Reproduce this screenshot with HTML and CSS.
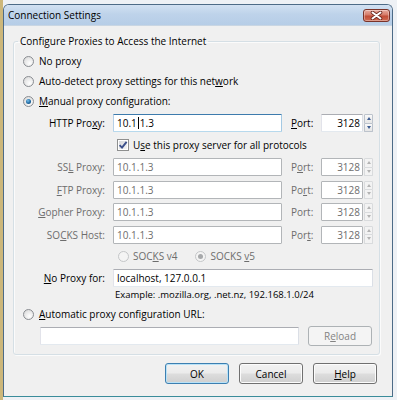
FILE: index.html
```html
<!DOCTYPE html>
<html>
<head>
<meta charset="utf-8">
<title>Connection Settings</title>
<link rel="stylesheet" href="styles.css">
</head>
<body>
<div class="window">
  <div class="titlebar">
    <span class="title">Connection Settings</span>
    <span class="close">
      <svg width="13" height="9" viewBox="0 0 13 9">
        <path d="M2.5 1.5 L10.5 7.5 M10.5 1.5 L2.5 7.5" stroke="#6b2a22" stroke-width="3.6" stroke-linecap="round"/>
        <path d="M2.5 1.5 L10.5 7.5 M10.5 1.5 L2.5 7.5" stroke="#ffffff" stroke-width="2" stroke-linecap="round"/>
      </svg>
    </span>
  </div>
  <div class="client">
    <fieldset class="group">
      <legend>Configure Proxies to Access the Internet</legend>
      <div class="opt"><span class="radio"></span><span>No proxy</span></div>
      <div class="opt"><span class="radio"></span><span>Auto-detect proxy settings for this net<u>w</u>ork</span></div>
      <div class="opt"><span class="radio on"></span><span><u>M</u>anual proxy configuration:</span></div>

      <div class="proxies">
        <span class="lbl">HTTP Pro<u>x</u>y:</span>
        <div class="field focus">10.1<i class="caret"></i>1.3</div>
        <span class="plbl"><u>P</u>ort:</span>
        <div class="port"><div class="field num">3128</div><div class="spin"><b class="up"></b><b class="down"></b></div></div>

        <div class="check-row"><span class="checkbox"><svg width="10" height="10" viewBox="0 0 10 10"><path d="M1.6 5.2 L4 7.6 L8.6 1.8" fill="none" stroke="#3b4f8a" stroke-width="1.9"/></svg></span><span>U<u>s</u>e this proxy server for all protocols</span></div>

        <span class="lbl dis">SS<u>L</u> Proxy:</span>
        <div class="field dis">10.1.1.3</div>
        <span class="plbl dis">P<u>o</u>rt:</span>
        <div class="port"><div class="field num dis">3128</div><div class="spin dis"><b class="up"></b><b class="down"></b></div></div>

        <span class="lbl dis"><u>F</u>TP Proxy:</span>
        <div class="field dis">10.1.1.3</div>
        <span class="plbl dis">Po<u>r</u>t:</span>
        <div class="port"><div class="field num dis">3128</div><div class="spin dis"><b class="up"></b><b class="down"></b></div></div>

        <span class="lbl dis"><u>G</u>opher Proxy:</span>
        <div class="field dis">10.1.1.3</div>
        <span class="plbl dis">Port:</span>
        <div class="port"><div class="field num dis">3128</div><div class="spin dis"><b class="up"></b><b class="down"></b></div></div>

        <span class="lbl dis">SO<u>C</u>KS Host:</span>
        <div class="field dis">10.1.1.3</div>
        <span class="plbl dis">Por<u>t</u>:</span>
        <div class="port"><div class="field num dis">3128</div><div class="spin dis"><b class="up"></b><b class="down"></b></div></div>

        <div class="socks-row dis">
          <span class="radio off"></span><span class="socks-v4">SOC<u>K</u>S v4</span>
          <span class="radio off on"></span><span>SOCKS <u>v</u>5</span>
        </div>

        <span class="lbl"><u>N</u>o Proxy for:</span>
        <div class="field wide">localhost, 127.0.0.1</div>
      </div>

      <div class="example">Example: .mozilla.org, .net.nz, 192.168.1.0/24</div>

      <div class="opt auto"><span class="radio"></span><span><u>A</u>utomatic proxy configuration URL:</span></div>
      <div class="url-row">
        <div class="field url"></div>
        <span class="btn dis">R<u>e</u>load</span>
      </div>
    </fieldset>

    <div class="buttons">
      <span class="btn default">OK</span>
      <span class="btn">Cancel</span>
      <span class="btn"><u>H</u>elp</span>
    </div>
  </div>
</div>
</body>
</html>
```
FILE: styles.css
```css
* { box-sizing: border-box; }

html, body {
  margin: 0;
  padding: 0;
}

body {
  width: 397px;
  height: 400px;
  overflow: hidden;
  background: linear-gradient(to right, #cdb77a 0, #cdb77a 3px, #eef1f5 3px);
  font: 10px/14px "Open Sans", "Liberation Sans", sans-serif;
  color: #000;
}

u { text-decoration-thickness: 1px; text-underline-offset: 1px; }

.window {
  margin: 4px 0 0 3px;
  width: 390px;
  height: 393px;
  border: 1px solid #4d6b87;
  border-bottom-color: #3a8c9a;
  border-radius: 6px 6px 0 0;
  background: #f0f0f0;
  display: flex;
  flex-direction: column;
  overflow: hidden;
}

.titlebar {
  height: 21px;
  flex: none;
  display: flex;
  align-items: center;
  padding: 0 2px 0 4px;
  background: linear-gradient(#d2e1f2, #bed3ea 45%, #b6cde7);
  border-bottom: 1px solid #c9d6e3;
}

.title { color: #000; }

.close {
  margin-left: auto;
  width: 27px;
  height: 13px;
  border: 1px solid #7a3329;
  border-radius: 3px;
  background: linear-gradient(#e8aa9e, #d57b69 45%, #c14d37 55%, #cf6a52);
  box-shadow: inset 0 0 0 1px rgba(255, 255, 255, 0.35);
  display: flex;
  align-items: center;
  justify-content: center;
}

.client {
  flex: 1;
  display: flex;
  flex-direction: column;
  padding: 8px 12px 0 9px;
}

.group {
  margin: 0;
  min-width: 0;
  padding: 3px 6px 8px 9px;
  border: 1px solid #d5dfe5;
  border-radius: 3px;
  box-shadow: inset 1px 1px 0 #fbfbfb, 1px 1px 0 #fbfbfb;
}

.group legend {
  padding: 0 2px;
  margin-left: -5px;
  line-height: 14px;
}

.opt {
  height: 20px;
  display: flex;
  align-items: center;
  gap: 5px;
}

.radio {
  flex: none;
  position: relative;
  width: 11px;
  height: 11px;
  border-radius: 50%;
  border: 1px solid #8a8d92;
  background: radial-gradient(circle at 62% 68%, #ffffff 0, #ececec 45%, #d3d3d3 100%);
}

.radio.on::after {
  content: "";
  position: absolute;
  left: 2px;
  top: 2px;
  width: 5px;
  height: 5px;
  border-radius: 50%;
  background: radial-gradient(circle at 40% 35%, #78c0ec, #1f6aa3 55%, #143f6b);
}

.radio.off {
  border-color: #c4c6c8;
  background: #f4f4f4;
}

.radio.off.on::after {
  background: #a7a9ab;
}

.proxies {
  margin-top: 3px;
  display: grid;
  grid-template-columns: 82px 169px 23px 52px;
  grid-template-rows: 18px 17px 18px 18px 18px 18px 16px 18px;
  column-gap: 8px;
  row-gap: 4.5px;
  align-items: center;
}

.lbl {
  text-align: right;
  white-space: nowrap;
}

.plbl {
  padding-left: 1px;
}

.dis { color: #6d6d6d; }

.field {
  height: 18px;
  border: 1px solid;
  border-color: #abadb3 #dbdfe6 #e3e9ef #e2e3ea;
  border-radius: 1px;
  background: #fff;
  padding: 0 3px;
  line-height: 16px;
  white-space: nowrap;
  overflow: hidden;
}

.field.focus {
  border-color: #3d7bad #a4c9e3 #b7d9ed #b5cfe7;
}

.field.dis {
  border-color: #b2b5b8;
}

.caret {
  display: inline-block;
  width: 1px;
  height: 12px;
  background: #000;
  vertical-align: -2px;
  margin: 0 1px;
}

.port {
  display: flex;
  gap: 1px;
  height: 18px;
}

.field.num {
  width: 42px;
  text-align: right;
  padding: 0 2px 0 0;
}

.spin {
  width: 9px;
  display: flex;
  flex-direction: column;
}

.spin b {
  flex: 1;
  display: flex;
  align-items: center;
  justify-content: center;
  border: 1px solid #bcc3cc;
  background: linear-gradient(#f9f9f9, #e6e6e6);
}

.spin .up { border-radius: 1px 1px 0 0; }
.spin .down { border-top: 0; border-radius: 0 0 1px 1px; }

.spin .up::after,
.spin .down::after {
  content: "";
  width: 0;
  height: 0;
  border-left: 2.5px solid transparent;
  border-right: 2.5px solid transparent;
}

.spin .up::after { border-bottom: 3px solid #3e5d92; }
.spin .down::after { border-top: 3px solid #3e5d92; }

.spin.dis b {
  border-color: #d9dbdd;
  background: #f3f3f3;
}

.spin.dis .up::after { border-bottom-color: #b3b3b3; }
.spin.dis .down::after { border-top-color: #b3b3b3; }

.check-row {
  grid-column: 2 / -1;
  display: flex;
  align-items: center;
  gap: 4px;
  padding-left: 4px;
}

.checkbox {
  flex: none;
  width: 12px;
  height: 12px;
  border: 1px solid #8e8f8f;
  background: linear-gradient(135deg, #d2d4d8, #f7f7f7);
  box-shadow: inset 0 0 0 1px #fff;
  display: flex;
  align-items: center;
  justify-content: center;
}

.socks-row {
  grid-column: 2 / -1;
  display: flex;
  align-items: center;
  gap: 4px;
  padding-left: 5px;
}

.socks-v4 { margin-right: 14px; }

.field.wide { grid-column: 2 / -1; }

.example {
  height: 15px;
  line-height: 15px;
  padding-left: 92px;
  font-size: 9.5px;
}

.opt.auto { margin-top: 2.5px; }

.url-row {
  margin-top: 2px;
  height: 20px;
  display: flex;
  align-items: center;
  gap: 9px;
  padding-left: 17px;
}

.field.url { width: 259px; }

.btn {
  width: 64px;
  height: 21px;
  border: 1px solid #707070;
  border-radius: 3px;
  background: linear-gradient(#f2f2f2, #ebebeb 48%, #dddddd 52%, #cfcfcf);
  box-shadow: inset 0 0 0 1px #fcfcfc;
  display: flex;
  align-items: center;
  justify-content: center;
}

.btn.default {
  border-color: #3c7fb1;
  box-shadow: inset 0 0 0 1px #b9e2f7;
}

.btn.dis {
  height: 20px;
  border-color: #adb2b5;
  background: #f4f4f4;
  box-shadow: none;
  color: #838383;
}

.buttons {
  margin-top: 8px;
  display: flex;
  justify-content: flex-end;
  gap: 10px;
  padding-right: 3px;
}
```
